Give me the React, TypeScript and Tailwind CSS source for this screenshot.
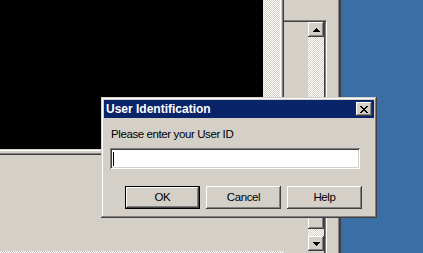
const checker =
  "bg-[repeating-conic-gradient(#ffffff_0%_25%,#d4d0c8_0%_50%)] [background-size:2px_2px]";

const raised =
  "bg-[#d4d0c8] shadow-[inset_-1px_-1px_#404040,inset_1px_1px_#ffffff,inset_-2px_-2px_#808080,inset_2px_2px_#d4d0c8]";

const Arrow = ({ up }: { up?: boolean }) => (
  <svg width="7" height="4" viewBox="0 0 7 4" shapeRendering="crispEdges">
    {up ? (
      <path d="M3 0h1v1h1v1h1v1h1v1H0V3h1V2h1V1h1z" fill="#000" />
    ) : (
      <path d="M0 0h7v1H6v1H5v1H4v1H3V3H2V2H1V1H0z" fill="#000" />
    )}
  </svg>
);

const CloseGlyph = () => {
  const rows = ["xx....xx", ".xx..xx.", "..xxxx..", "...xx...", "..xxxx..", ".xx..xx.", "xx....xx"];
  return (
    <svg width="8" height="7" viewBox="0 0 8 7" shapeRendering="crispEdges">
      {rows.map((row, y) =>
        row.split("").map((c, x) =>
          c === "x" ? <rect key={`${x}-${y}`} x={x} y={y} width="1" height="1" fill="#000" /> : null
        )
      )}
    </svg>
  );
};

const DialogButton = ({ label, isDefault }: { label: string; isDefault?: boolean }) => (
  <button
    className={`w-[75px] h-[23px] flex items-center justify-center text-[11.5px] tracking-[-0.4px] text-black bg-[#d4d0c8] ${
      isDefault
        ? "shadow-[inset_0_0_0_1px_#000,inset_-2px_-2px_#404040,inset_2px_2px_#ffffff,inset_-3px_-3px_#808080,inset_3px_3px_#d4d0c8]"
        : "shadow-[inset_-1px_-1px_#404040,inset_1px_1px_#ffffff,inset_-2px_-2px_#808080,inset_2px_2px_#d4d0c8]"
    }`}>
    {label}
  </button>
);

export default function App() {
  return (
    <div
      className="relative w-[423px] h-[253px] flex bg-[#d4d0c8] overflow-hidden"
      style={{ fontFamily: '"Liberation Sans", Arial, sans-serif' }}>
      {/* left: black window and its frame */}
      <div className="w-[284px] flex flex-col">
        <div className="h-[149px] flex">
          <div className="w-[263px] bg-black" />
          <div className={`w-[17px] ${checker}`} />
          <div className="w-[1px] bg-white" />
          <div className="w-[1px] bg-[#d4d0c8]" />
          <div className="w-[1px] bg-[#808080]" />
          <div className="w-[1px] bg-[#404040]" />
        </div>
        <div className="mt-[1px] h-[1px] bg-white" />
        <div className="mt-[2px] h-[1px] bg-[#808080]" />
        <div className="h-[1px] bg-[#404040]" />
        <div className="flex-1" />
        <div className={`h-[2px] ${checker}`} />
      </div>

      {/* middle: list box with scrollbar */}
      <div className="w-[57px] flex">
        <div className="w-[43px] flex flex-col">
          <div className="h-[20px]" />
          <div className="flex-1 flex flex-col">
            <div className="h-[1px] bg-[#808080] mr-[1px]" />
            <div className="h-[1px] bg-[#404040] mr-[1px]" />
            <div className="flex-1 flex">
              <div className="w-[24px]" />
              <div className="w-[16px] flex flex-col">
                <div className={`h-[15px] flex items-center justify-center ${raised}`}>
                  <Arrow up />
                </div>
                <div className={`flex-1 ${checker}`} />
                <div className={`h-[79px] ${raised}`} />
                <div className={`h-[7px] ${checker}`} />
                <div className={`h-[15px] flex items-center justify-center ${raised}`}>
                  <Arrow />
                </div>
                <div className="h-[2px]" />
              </div>
              <div className="w-[1px] bg-[#404040]" />
              <div className="w-[1px] bg-[#808080]" />
              <div className="w-[1px] bg-white" />
            </div>
          </div>
        </div>
        <div className="w-[11px]" />
        <div className="w-[1px] bg-[#808080]" />
        <div className="w-[2px] bg-[#404040]" />
      </div>

      {/* desktop */}
      <div className="flex-1 bg-[#3a6ea5]" />

      {/* dialog */}
      <div className="absolute left-[101px] top-[97px] w-[276px] h-[121px] p-[3px] flex flex-col bg-[#d4d0c8] shadow-[inset_-1px_-1px_#404040,inset_1px_1px_#d4d0c8,inset_-2px_-2px_#808080,inset_2px_2px_#ffffff]">
        <div className="h-[18px] bg-[#0a246a] flex items-center justify-between pl-[2px] pr-[2px]">
          <span className="text-white font-bold text-[12px] leading-none">User Identification</span>
          <div className={`w-[16px] h-[14px] flex items-center justify-center ${raised}`}>
            <CloseGlyph />
          </div>
        </div>
        <div className="flex flex-col px-[6px]">
          <div className="mt-[10px] pl-[1px] text-[11.5px] leading-[13px] tracking-[-0.4px] text-black">
            Please enter your User ID
          </div>
          <div className="mt-[7px] w-[250px] h-[21px] bg-white flex items-center pl-[3px] shadow-[inset_1px_1px_#808080,inset_-1px_-1px_#ffffff,inset_2px_2px_#404040,inset_-2px_-2px_#d4d0c8]">
            <div className="w-[1px] h-[14px] bg-black" />
          </div>
          <div className="mt-[17px] flex gap-[6px] pl-[15px]">
            <DialogButton label="OK" isDefault />
            <DialogButton label="Cancel" />
            <DialogButton label="Help" />
          </div>
        </div>
      </div>
    </div>
  );
}
